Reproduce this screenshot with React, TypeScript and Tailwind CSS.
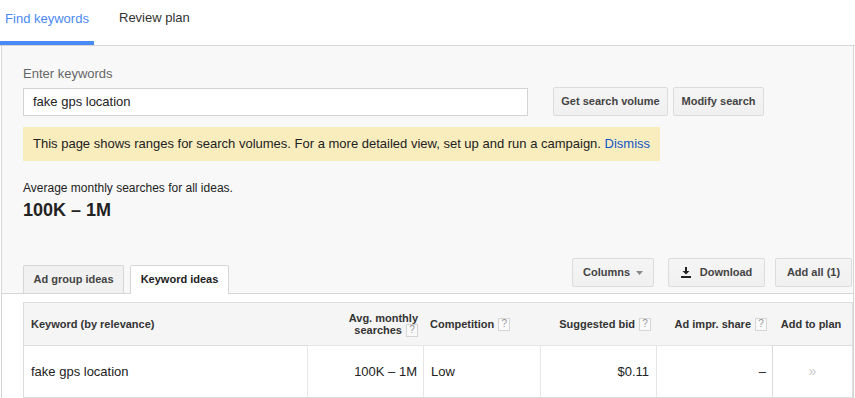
import React from "react";

const Q = () => (
  <span className="ml-[4px] inline-flex h-[13px] w-[12px] items-center justify-center border border-[#d5d5d5] bg-[#fafafa] text-[10px] font-normal leading-none text-[#999]">
    ?
  </span>
);

const Btn = ({ children, className = "" }: { children: React.ReactNode; className?: string }) => (
  <div
    className={
      "flex h-[29px] items-center justify-center rounded-[2px] border border-[#dcdcdc] bg-gradient-to-b from-[#f5f5f5] to-[#f0f0f0] text-[11px] font-bold text-[#444] " +
      className
    }
  >
    {children}
  </div>
);

export default function App() {
  return (
    <div className="h-[398px] w-[855px] overflow-hidden bg-white text-[#222]" style={{ fontFamily: '"Liberation Sans", Arial, sans-serif' }}>
      {/* Top tabs */}
      <div className="flex h-[46px] border-b border-[#d6d6d6]">
        <div className="flex h-[45px] w-[94px] items-center justify-center border-b-4 border-[#4a8af4] pb-[4px] text-[13px] text-[#4a8af4]">
          Find keywords
        </div>
        <div className="ml-[25px] flex h-[45px] items-center pb-[9px] text-[13px] text-[#333]">Review plan</div>
      </div>

      {/* Gray main area */}
      <div className="ml-[1px] mr-[1px] border-b border-l border-r border-[#d6d6d6] bg-[#f8f8f8] pl-[21px] pt-[20px]">
        <div className="mb-[5px] h-[16px] text-[13px] leading-4 text-[#666]">Enter keywords</div>
        <div className="flex items-center">
          <div className="flex h-[28px] w-[505px] items-center border border-[#d3d3d3] bg-white pl-[9px] text-[13px] text-[#222]">
            fake gps location
          </div>
          <Btn className="ml-[25px] w-[115px]">Get search volume</Btn>
          <Btn className="ml-[5px] w-[91px]">Modify search</Btn>
        </div>
        <div className="mt-[11px] flex h-[34px] w-[637px] items-center bg-[#f9edbe] pl-[10px] text-[13px] text-[#222]">
          This page shows ranges for search volumes. For a more detailed view, set up and run a campaign.&nbsp;
          <span className="text-[#1155cc]">Dismiss</span>
        </div>
        <div className="mt-[20px] h-[15px] text-[12px] leading-[15px]">Average monthly searches for all ideas.</div>
        <div className="mt-[3px] h-[22px] text-[18px] font-bold leading-[22px]">100K – 1M</div>

        <div className="mt-[37px] flex h-[35px] items-end justify-between">
          <div className="flex items-end">
            <div className="flex h-[28px] w-[101px] items-center justify-center rounded-t-[2px] border border-b-0 border-[#d6d6d6] bg-[#f1f1f1] text-[11px] font-bold text-[#444]">
              Ad group ideas
            </div>
            <div className="relative top-[1px] ml-[6px] flex h-[29px] w-[99px] items-center justify-center rounded-t-[2px] border border-b-0 border-[#d6d6d6] bg-white pb-[1px] text-[11px] font-bold text-[#222]">
              Keyword ideas
            </div>
          </div>
          <div className="mb-[6px] mr-[1px] flex items-center">
            <Btn className="w-[82px]">
              Columns
              <svg width="7" height="4" viewBox="0 0 7 4" className="ml-[6px]">
                <path d="M0 0h7L3.5 4z" fill="#888" />
              </svg>
            </Btn>
            <Btn className="ml-[14px] w-[97px]">
              <svg width="10" height="11" viewBox="0 0 10 11" className="mr-[9px]">
                <path d="M4 0h2v4h2.5L5 7.5 1.5 4H4z" fill="#222" />
                <rect x="0" y="9" width="10" height="2" fill="#222" />
              </svg>
              Download
            </Btn>
            <Btn className="ml-[10px] w-[77px]">Add all (1)</Btn>
          </div>
        </div>
      </div>

      {/* White table area */}
      <div className="ml-[1px] mr-[1px] h-[200px] border-l border-r border-[#d6d6d6] pl-[21px] pt-[8px]">
        <div className="grid grid-cols-[283px_116px_117px_116px_116px_1fr] border border-[#dcdcdc] text-[13px]">
          {/* header */}
          <div className="flex h-[42px] items-center bg-[#f5f5f5] pl-[7px] text-[11px] font-bold text-[#333]">Keyword (by relevance)</div>
          <div className="flex h-[42px] flex-col items-end justify-center bg-[#f5f5f5] pr-[5px] text-[11px] font-bold leading-[12px] text-[#333]">
            <div>Avg. monthly</div>
            <div className="flex items-center">
              searches
              <Q />
            </div>
          </div>
          <div className="flex h-[42px] items-center bg-[#f5f5f5] pl-[7px] text-[11px] font-bold text-[#333]">
            Competition
            <Q />
          </div>
          <div className="flex h-[42px] items-center justify-end bg-[#f5f5f5] pr-[5px] text-[11px] font-bold text-[#333]">
            Suggested bid
            <Q />
          </div>
          <div className="flex h-[42px] items-center justify-end bg-[#f5f5f5] pr-[5px] text-[11px] font-bold text-[#333]">
            Ad impr. share
            <Q />
          </div>
          <div className="flex h-[42px] items-center justify-center bg-[#f5f5f5] pr-[2px] text-[11px] font-bold text-[#333]">Add to plan</div>

          {/* row */}
          <div className="flex h-[52px] items-center border-t border-[#dcdcdc] pl-[7px]">fake gps location</div>
          <div className="flex h-[52px] items-center justify-end border-l border-t border-[#e6e6e6] pr-[6px]">100K – 1M</div>
          <div className="flex h-[52px] items-center border-l border-t border-[#e6e6e6] pl-[7px]">Low</div>
          <div className="flex h-[52px] items-center justify-end border-l border-t border-[#e6e6e6] pr-[7px]">$0.11</div>
          <div className="flex h-[52px] items-center justify-end border-l border-t border-[#e6e6e6] pr-[6px]">–</div>
          <div className="flex h-[52px] items-center justify-center border-l border-t border-[#dcdcdc] text-[14px] text-[#c8c8c8]">»</div>
        </div>
      </div>
    </div>
  );
}
